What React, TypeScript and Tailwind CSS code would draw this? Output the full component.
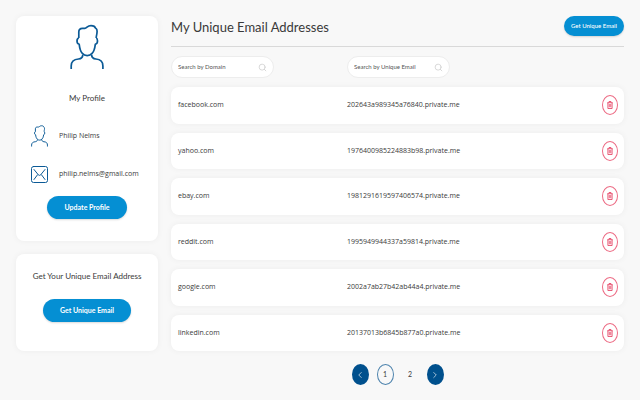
import { useState } from 'react';
import type { ReactNode, SVGProps } from 'react';
import clsx from 'clsx';
import { ChevronLeft, ChevronRight, Search } from 'lucide-react';

interface Alias {
    domain: string;
    address: string;
}

const ALIASES: Alias[] = [
    { domain: 'facebook.com', address: '202643a989345a76840.private.me' },
    { domain: 'yahoo.com', address: '1976400985224883b98.private.me' },
    { domain: 'ebay.com', address: '1981291619597406574.private.me' },
    { domain: 'reddit.com', address: '1995949944337a59814.private.me' },
    { domain: 'google.com', address: '2002a7ab27b42ab44a4.private.me' },
    { domain: 'linkedin.com', address: '20137013b6845b877a0.private.me' },
];

const PAGES = [1, 2];

export default function App() {
    const [domain, setDomain] = useState('');
    const [address, setAddress] = useState('');
    const [page, setPage] = useState(1);

    const rows = ALIASES.filter(a => a.domain.includes(domain) && a.address.includes(address));

    return (
        <div className="min-h-screen flex items-start gap-[13px] bg-[#f8f8f8] px-4 pt-4 font-[Lato,sans-serif] text-[#3a3a3a]">
            <aside className="w-[142px] shrink-0 flex flex-col gap-[13px]">
                {/* Profile */}
                <section className="h-[225px] flex flex-col items-center rounded-lg bg-white pt-2 shadow-[0_0_6px_rgba(0,0,0,0.05)]">
                    <PersonIcon className="w-[34px] h-[46px]" strokeWidth={1.7} />
                    <h2 className="mt-[22px] text-[8px] leading-3">My Profile</h2>
                    <ul className="mt-[13px] w-full px-[15px] font-['Open_Sans',sans-serif] text-[7px] leading-3">
                        <li className="h-[38px] flex items-center gap-[11px]">
                            <PersonIcon className="w-[17px] h-[22px] shrink-0" strokeWidth={2} />
                            Philip Nelms
                        </li>
                        <li className="h-[38px] flex items-center gap-[11px]">
                            <MailIcon className="w-[17px] h-[17px] shrink-0" />
                            philip.nelms@gmail.com
                        </li>
                    </ul>
                    <PillButton label="Update Profile" className="mt-[3px] w-20 h-[23px] text-[7px] font-bold" />
                </section>

                {/* New address */}
                <section className="h-[97px] flex flex-col items-center rounded-lg bg-white pt-4 shadow-[0_0_6px_rgba(0,0,0,0.05)]">
                    <h2 className="text-[8px] leading-3">Get Your Unique Email Address</h2>
                    <PillButton label="Get Unique Email" className="mt-[17px] w-[88px] h-[23px] text-[7px] font-bold" />
                </section>
            </aside>

            <main className="flex-1 min-w-0">
                <header className="h-[31px] flex items-start justify-between border-b border-[#d9d9d9]">
                    <h1 className="text-[13px] leading-[22px]">My Unique Email Addresses</h1>
                    <PillButton label="Get Unique Email" className="w-[60px] h-5 text-[6px] font-medium" />
                </header>

                <table className="w-full h-[313px] table-fixed border-separate border-spacing-x-0 border-spacing-y-[9px] text-left font-['Open_Sans',sans-serif] text-[7px] leading-3">
                    <thead>
                        <tr className="h-[22px]">
                            <th scope="col" className="w-[176px] p-0 font-normal">
                                <SearchBox label="Search by Domain" value={domain} onChange={setDomain} />
                            </th>
                            <th scope="col" className="p-0 font-normal">
                                <SearchBox label="Search by Unique Email" value={address} onChange={setAddress} />
                            </th>
                            <th scope="col" className="w-8 p-0" aria-label="Delete" />
                        </tr>
                    </thead>
                    <tbody>
                        {rows.map(a => (
                            <tr key={a.domain} className="h-9 rounded-lg bg-white shadow-[0_0_6px_rgba(0,0,0,0.05)]">
                                <td className="rounded-l-lg py-0 pl-[7px] pr-0">{a.domain}</td>
                                <td className="p-0">{a.address}</td>
                                <td className="rounded-r-lg py-0 pl-0 pr-[6px]">
                                    <button
                                        type="button"
                                        aria-label={`Delete ${a.domain}`}
                                        className="ml-auto w-4 h-5 flex items-center justify-center rounded-[50%] border border-[#ec6b84] text-[#e5395b]"
                                    >
                                        <TrashIcon className="w-[6px] h-2" />
                                    </button>
                                </td>
                            </tr>
                        ))}
                    </tbody>
                </table>

                <nav aria-label="Pages" className="mt-1 flex justify-center gap-2 text-[7px] leading-none">
                    <PageButton label="Previous page" filled onClick={() => setPage(1)}>
                        <ChevronLeft className="w-[10px] h-3" strokeWidth={1.5} />
                    </PageButton>
                    {PAGES.map(n => (
                        <PageButton key={n} label={`Page ${n}`} current={n === page} onClick={() => setPage(n)}>
                            {n}
                        </PageButton>
                    ))}
                    <PageButton label="Next page" filled onClick={() => setPage(2)}>
                        <ChevronRight className="w-[10px] h-3" strokeWidth={1.5} />
                    </PageButton>
                </nav>
            </main>
        </div>
    );
}

/* ── Controls ──────────────────────────────────────────────────── */

function PillButton({ label, className }: { label: string; className: string }) {
    return (
        <button
            type="button"
            className={clsx(
                'rounded-full bg-[#058fd3] leading-none whitespace-nowrap text-white shadow-[0_1px_2px_rgba(0,0,0,0.15)]',
                className,
            )}
        >
            {label}
        </button>
    );
}

function SearchBox({ label, value, onChange }: { label: string; value: string; onChange: (v: string) => void }) {
    return (
        <label className="w-[103px] h-[22px] flex items-center rounded-full border border-[#ededed] bg-white px-[6px] font-[Lato,sans-serif]">
            <input
                type="text"
                aria-label={label}
                placeholder={label}
                value={value}
                onChange={e => onChange(e.target.value)}
                className="flex-1 min-w-0 bg-transparent text-[6px] leading-3 outline-none placeholder:text-[#555]"
            />
            <Search className="w-[9px] h-[9px] text-[#ccc]" strokeWidth={2} />
        </label>
    );
}

function PageButton({
    label, filled = false, current = false, onClick, children,
}: { label: string; filled?: boolean; current?: boolean; onClick: () => void; children: ReactNode }) {
    return (
        <button
            type="button"
            aria-label={label}
            aria-current={current ? 'page' : undefined}
            onClick={onClick}
            className={clsx(
                'w-[17px] h-[21px] flex items-center justify-center rounded-[50%]',
                filled && 'bg-[#00508d] text-white',
                current && 'border border-[#4d83ad]',
            )}
        >
            {children}
        </button>
    );
}

/* ── Icons ─────────────────────────────────────────────────────── */

function PersonIcon(props: SVGProps<SVGSVGElement>) {
    return (
        <svg viewBox="0 0 34 46" preserveAspectRatio="none" fill="none" stroke="#0b5a96" strokeLinejoin="round" aria-hidden="true" {...props}>
            {/* hair */}
            <path d="M8.800 14V8c0-2.600 1.400-3.700 3.600-3.700h2.400C17 4.300 17.200 1.600 21 1.600c2.400 0 4 .6 4.400 2.400 1.600.8 1.900 3.200 1.500 5.500-.2 1.500-.7 2.700-.7 4.500" />
            {/* ears and jaw */}
            <path d="M8.800 14C7.500 14.300 7 15.200 7 17s.5 2.800 2.200 3.300C9.700 24.500 10.500 27.500 12.300 29.300 13.700 31 15.500 31.600 17.200 31.600s3.500-.6 4.900-2.300c1.800-1.800 2.700-4.800 3.200-9 1.700-.5 2.200-1.500 2.200-3.300s-.3-2.700-1.300-3" />
            {/* shoulders */}
            <path d="M12.800 30.500c0 2.600-1.400 4.300-4.300 4.500C4 35.300 1.200 37.500 1.200 42v3M21.600 30.500c0 2.600 1.400 4.300 4.300 4.500 4.500.3 7 2.500 7 7v3" />
        </svg>
    );
}

function MailIcon(props: SVGProps<SVGSVGElement>) {
    return (
        <svg viewBox="0 0 17 17" fill="none" stroke="#0b5a96" strokeWidth={1} strokeLinecap="round" aria-hidden="true" {...props}>
            <rect x="0.500" y="0.500" width="16" height="16" rx="2" />
            <path d="M3 3.500l4.300 5.300c.7.800 1.700.8 2.400 0L14 3.500M3 13.500l3.500-4.700M14 13.500l-3.500-4.700" />
        </svg>
    );
}

function TrashIcon(props: SVGProps<SVGSVGElement>) {
    return (
        <svg viewBox="0 0 12 16" fill="none" stroke="currentColor" strokeWidth={1.6} aria-hidden="true" {...props}>
            <path d="M.5 3.500h11M4 3.500V1h4v2.500M1.800 3.500V15h8.400V3.500M4.500 6v6.500M7.500 6v6.500" />
        </svg>
    );
}
